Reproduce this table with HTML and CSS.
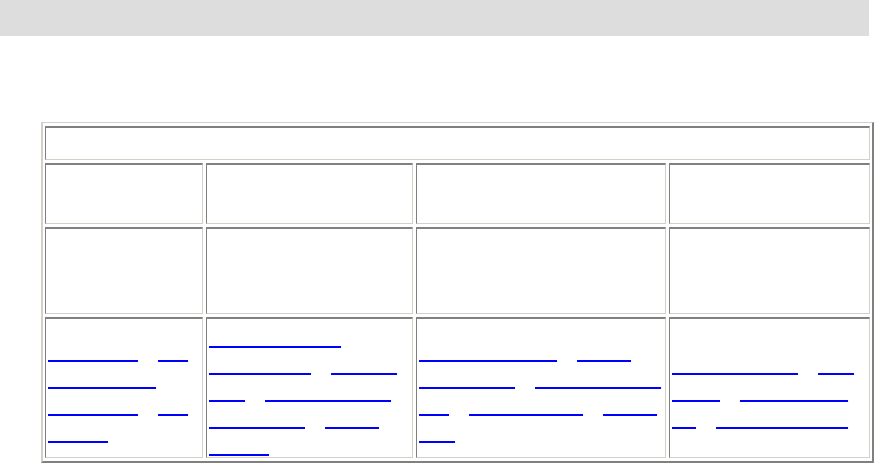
FILE: index.html
```html
<!DOCTYPE html>
<html>
<head>
<meta charset="utf-8">
<title>Documentation Index</title>
<link rel="stylesheet" href="styles.css">
</head>
<body>
<div class="topbar"><span class="title">Documentation</span></div>
<div class="page">
  <div class="grid">
    <div class="cell span4"><div class="txt">Documentation Index</div></div>

    <div class="cell"><div class="txt">Basics</div></div>
    <div class="cell"><div class="txt">Design</div></div>
    <div class="cell"><div class="txt">Reference</div></div>
    <div class="cell"><div class="txt">Help</div></div>

    <div class="cell"><div class="txt">First steps</div></div>
    <div class="cell"><div class="txt">Structure</div></div>
    <div class="cell"><div class="txt">API and tools</div></div>
    <div class="cell"><div class="txt">Questions</div></div>

    <div class="cell"><div class="txt">
      <a href="#">Getting Started</a><span class="sep">|</span><a href="#">Intro</a><br>
      <a href="#">Installation Guide</a><br>
      <a href="#">Configuring App</a><span class="sep">|</span><a href="#">Tools</a><br>
      <a href="#">Appendices</a>
    </div></div>
    <div class="cell"><div class="txt">
      <a href="#">Architecture Overviews</a><br>
      <a href="#">Component Library</a><span class="sep">|</span><a href="#">Data Models</a><br>
      <a href="#">Events</a><span class="sep">|</span><a href="#">Service Configuration</a><br>
      <a href="#">Error Management</a><span class="sep">|</span><a href="#">Reporting</a><br>
      <a href="#">Deployment</a>
    </div></div>
    <div class="cell"><div class="txt">
      <a href="#">Reference Documentation</a><span class="sep">|</span><a href="#">Utilities</a><br>
      <a href="#">Plugin Interface</a><span class="sep">|</span><a href="#">Localization Settings</a><br>
      <a href="#">Hooks</a><span class="sep">|</span><a href="#">Migration Checklist</a><span class="sep">|</span><a href="#">Changelog</a><br>
      <a href="#">Issues</a>
    </div></div>
    <div class="cell"><div class="txt">
      <a href="#">Frequently Asked Info</a><span class="sep">|</span><a href="#">Forums</a><br>
      <a href="#">Security</a><span class="sep">|</span><a href="#">Performance Tuning</a><br>
      <a href="#">Blog</a><span class="sep">|</span><a href="#">Contributor Guidelines</a>
    </div></div>
  </div>
</div>
</body>
</html>
```
FILE: styles.css
```css
html, body {
  margin: 0;
  padding: 0;
  background: #ffffff;
}

body {
  font-family: "Liberation Mono", "DejaVu Sans Mono", monospace;
  font-size: 10px;
  color: #ffffff;
}

.topbar {
  height: 36px;
  margin-right: 5px;
  background: #dddddd;
}

.title {
  color: #dddddd;
}

.page {
  padding: 86px 0 0 41px;
}

.grid {
  display: grid;
  grid-template-columns: 158px 207px 250px 201px;
  grid-template-rows: 34px 61px 87px 141px;
  gap: 3px;
  width: max-content;
  padding: 3px 2px;
  border-style: solid;
  border-width: 1px 2px 2px 2px;
  border-color: #d4d0c8 #808080 #808080 #d4d0c8;
}

.cell {
  box-sizing: border-box;
  display: flex;
  align-items: center;
  padding: 2px 2px 1px 2px;
  border-style: solid;
  border-width: 2px 1px 1px 1px;
  border-color: #808080 #d4d0c8 #d4d0c8 #808080;
}

.span4 {
  grid-column: 1 / span 4;
}

.txt {
  line-height: 27px;
  white-space: nowrap;
}

.txt a {
  color: #ffffff;
  text-decoration: underline;
  text-decoration-color: #0000ff;
  text-decoration-thickness: 2px;
  text-underline-offset: 9px;
  text-decoration-skip-ink: none;
}

.sep {
  display: inline-block;
  width: 20px;
  text-align: center;
  color: #ffffff;
}
```
